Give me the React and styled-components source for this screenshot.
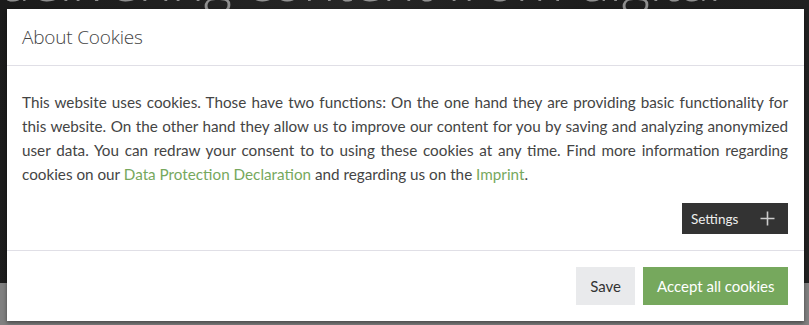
import React from "react";
import styled, { createGlobalStyle } from "styled-components";

const GlobalStyle = createGlobalStyle`
  html, body {
    margin: 0;
    padding: 0;
    background: #808080;
    font-family: "Lato", "Liberation Sans", sans-serif;
  }
`;

const Page = styled.div`
  position: relative;
  width: 809px;
  height: 325px;
  overflow: hidden;
  background: #808080;
`;

const Hero = styled.div`
  height: 283px;
  background: linear-gradient(100deg, #1b1b1b 0%, #262626 40%, #1d1d1d 70%, #222 100%);
  display: flex;
  justify-content: center;
  padding-right: 90px;
`;

const HeroTitle = styled.h1`
  margin: -47px 0 0 0;
  font-family: "Open Sans", sans-serif;
  font-weight: 300;
  font-size: 54px;
  line-height: 54px;
  color: rgba(255, 255, 255, 0.5);
  white-space: nowrap;
`;

const Modal = styled.div`
  position: absolute;
  top: 9px;
  left: 7px;
  width: 797px;
  height: 312px;
  background: #fff;
  box-shadow: 0 2px 4px rgba(0, 0, 0, 0.45);
  display: flex;
  flex-direction: column;
`;

const Header = styled.div`
  height: 57px;
  box-sizing: border-box;
  border-bottom: 1px solid #e0dfe6;
  display: flex;
  align-items: center;
  padding: 0 15px;
`;

const Title = styled.h2`
  margin: 0;
  font-family: "Open Sans", sans-serif;
  font-weight: 300;
  font-size: 19px;
  color: #444;
  letter-spacing: -0.2px;
`;

const Body = styled.div`
  padding: 24px 16px 16px 15px;
  border-bottom: 1px solid #e0dfe6;
  display: flex;
  flex-direction: column;
`;

const Text = styled.p`
  margin: 0;
  font-size: 15.25px;
  line-height: 24px;
  color: #444;
  text-align: justify;
`;

const Link = styled.a`
  color: #76a85d;
  text-decoration: none;
`;

const SettingsRow = styled.div`
  display: flex;
  justify-content: flex-end;
  margin-top: 17px;
`;

const SettingsButton = styled.button`
  width: 106px;
  height: 31px;
  border: 0;
  background: #333;
  color: #eee;
  font-family: inherit;
  font-size: 13.5px;
  display: flex;
  align-items: center;
  justify-content: space-between;
  padding: 0 13px 0 9px;
`;

const Footer = styled.div`
  flex: 1;
  display: flex;
  justify-content: flex-end;
  align-items: flex-start;
  gap: 8px;
  padding: 16px 16px 0 0;
`;

const Action = styled.button`
  height: 38px;
  border: 0;
  padding: 0 ${(p) => (p.$primary ? "13.5px" : "14.5px")};
  background: ${(p) => (p.$primary ? "#76a85d" : "#e9eaec")};
  color: ${(p) => (p.$primary ? "#fff" : "#333")};
  font-family: inherit;
  font-size: 15px;
`;

const PlusIcon = () => (
  <svg width="15" height="15" viewBox="0 0 15 15">
    <path d="M7.5 0.5v14M0.5 7.5h14" stroke="#ccc" strokeWidth="1.6" fill="none" />
  </svg>
);

export default function App() {
  return (
    <Page>
      <GlobalStyle />
      <Hero>
        <HeroTitle>delivering content from digital</HeroTitle>
      </Hero>
      <Modal>
        <Header>
          <Title>About Cookies</Title>
        </Header>
        <Body>
          <Text>
            This website uses cookies. Those have two functions: On the one hand they are providing basic
            functionality for this website. On the other hand they allow us to improve our content for you by
            saving and analyzing anonymized user data. You can redraw your consent to to using these cookies
            at any time. Find more information regarding cookies on our{" "}
            <Link href="#">Data Protection Declaration</Link> and regarding us on the{" "}
            <Link href="#">Imprint</Link>.
          </Text>
          <SettingsRow>
            <SettingsButton>
              Settings
              <PlusIcon />
            </SettingsButton>
          </SettingsRow>
        </Body>
        <Footer>
          <Action>Save</Action>
          <Action $primary>Accept all cookies</Action>
        </Footer>
      </Modal>
    </Page>
  );
}
